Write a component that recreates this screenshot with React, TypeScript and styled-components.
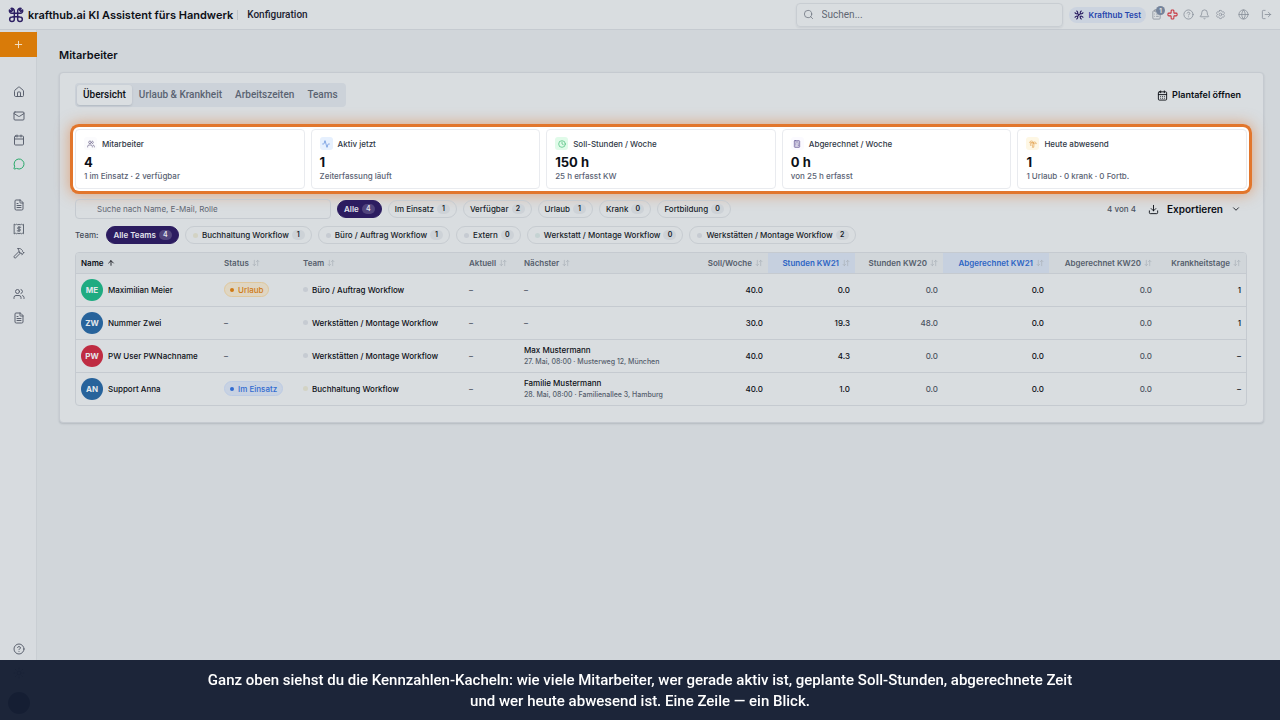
import React from "react";
import styled, { createGlobalStyle, css } from "styled-components";
import {
  Activity, ArrowDownUp, ArrowUp, Calendar, CalendarDays, ChevronDown, CircleHelp, ClipboardList, Clock,
  Cross, Download, FileText, Globe, Hammer, House, LogOut, Bell, Mail, MessageCircle, Plus, Search,
  Sun, Users, Calculator, TreePalm,
} from "lucide-react";
import { HiOutlineCog6Tooth } from "react-icons/hi2";

const GlobalStyle = createGlobalStyle`
  *, *::before, *::after { box-sizing: border-box; }
  body { margin: 0; background: #d1d6da; color: #0c0f16; font-family: Inter, "Noto Sans", sans-serif; font-size: 8px; font-weight: 500; line-height: 12px; }
  button, input { font: inherit; color: inherit; }
  button { border: 0; background: none; padding: 0; cursor: pointer; }
  a { color: inherit; text-decoration: none; }
  h1, p { margin: 0; }
  svg { flex: none; display: block; }
`;

const Page = styled.div`
  min-height: 100vh;
  display: flex;
  flex-direction: column;
`;

const TopBar = styled.header`
  height: 30px;
  display: flex;
  align-items: center;
  padding: 0 8px;
  background: #d9dde0;
  border-bottom: 1px solid #c5cad0;
`;

const Brand = styled.a`
  display: flex;
  align-items: center;
  gap: 4px;
  font-size: 11px;
  line-height: 14px;
  font-weight: 600;
  white-space: nowrap;
`;

const Crumb = styled.span`
  margin-left: 4px;
  padding-left: 9px;
  border-left: 1px solid #bfc5cb;
  font-family: Roboto, sans-serif;
  font-size: 10px;
  line-height: 10px;
  color: #1c2230;
`;

const SearchField = styled.label`
  display: flex;
  align-items: center;
  gap: 8px;
  width: 267px;
  height: 24px;
  margin-left: auto;
  padding: 0 6px;
  border: 1px solid #c8cdd2;
  border-radius: 4px;
  box-shadow: 0 1px 2px rgba(30, 41, 59, 0.08);
  color: #6d7480;
`;

const BareInput = styled.input`
  flex: 1;
  min-width: 0;
  border: 0;
  padding: 0;
  outline: 0;
  background: transparent;
  font-weight: 400;
  &::placeholder { color: #5f6672; opacity: 1; }
`;

const TopInput = styled(BareInput)`
  font-family: Roboto, sans-serif;
  font-size: 10px;
`;

const OrgChip = styled.button`
  display: flex;
  align-items: center;
  gap: 5px;
  height: 16px;
  margin: 0 5px 0 6px;
  padding: 0 5px;
  border-radius: 8px;
  background: #cbd3df;
  color: #2544ad;
  font-weight: 600;
  white-space: nowrap;
`;

const TopActions = styled.nav`
  display: flex;
  align-items: center;
  gap: 5px;
  color: #858c97;
`;

const TopAction = styled.button<{ $accent?: boolean; $apart?: boolean }>`
  position: relative;
  color: ${(p) => (p.$accent ? "#c8303a" : "inherit")};
  margin-left: ${(p) => (p.$apart ? "7px" : "0")};
`;

const Count = styled.span`
  position: absolute;
  top: -3px;
  right: -3px;
  width: 9px;
  height: 9px;
  border-radius: 50%;
  background: #75849b;
  color: #e4e8ec;
  font-size: 6px;
  line-height: 9px;
  font-weight: 700;
  text-align: center;
`;

const Body = styled.div`
  flex: 1;
  display: flex;
`;

const Sidebar = styled.nav`
  flex: none;
  width: 37px;
  padding-top: 2px;
  display: flex;
  flex-direction: column;
  background: #d7dbdf;
  box-shadow: inset -1px 0 #c9ced3;
  color: #555c69;
`;

const AddButton = styled.button`
  height: 25px;
  display: grid;
  place-items: center;
  background: #d97b09;
  color: #f3e4cf;
  margin-bottom: 6px;
`;

const SideGroup = styled.div<{ $bottom?: boolean }>`
  padding-top: 17px;
  ${(p) => p.$bottom && css`margin-top: auto;`}
`;

const SideLink = styled.a<{ $green?: boolean }>`
  height: 24px;
  display: grid;
  place-items: center;
  color: ${(p) => (p.$green ? "#22a765" : "inherit")};
`;

const Avatar = styled.span<{ $color: string }>`
  flex: none;
  display: grid;
  place-items: center;
  width: 22px;
  height: 22px;
  border-radius: 50%;
  background: ${(p) => p.$color};
  color: #e3e7ec;
  font-weight: 700;
`;

const Profile = styled.a`
  height: 35px;
  display: grid;
  place-items: center;
`;

const Main = styled.main`
  flex: 1;
  min-width: 0;
  padding: 17px 16px 0 22px;
`;

const Title = styled.h1`
  font-size: 11px;
  line-height: 16px;
  font-weight: 600;
`;

const Panel = styled.section`
  margin-top: 9px;
  padding: 10px 16px 16px 15px;
  background: #d9dde0;
  border: 1px solid #c5cad0;
  border-radius: 4px;
  box-shadow: 0 1px 2px rgba(30, 41, 59, 0.16);
`;

const Toolbar = styled.div`
  display: flex;
  align-items: center;
  justify-content: space-between;
`;

const Tabs = styled.div`
  display: flex;
  gap: 1px;
  padding: 2px;
  border-radius: 4px;
  background: #ccd2d9;
`;

const Tab = styled.button<{ $active?: boolean }>`
  height: 20px;
  padding: 0 6px;
  border-radius: 3px;
  font-family: Roboto, sans-serif;
  font-size: 10px;
  color: #5a6372;
  ${(p) => p.$active && css`
    background: #dadee1;
    color: #0c0f16;
    box-shadow: 0 1px 2px rgba(30, 41, 59, 0.15);
  `}
`;

const TextButton = styled.button<{ $wide?: boolean }>`
  display: flex;
  align-items: center;
  gap: ${(p) => (p.$wide ? "8px" : "4px")};
  padding: 0 6px;
  font-size: ${(p) => (p.$wide ? "10px" : "9px")};
  font-weight: 600;
`;

const Kpis = styled.div`
  display: grid;
  grid-template-columns: repeat(5, 1fr);
  gap: 6px;
  margin: 22px 0 10px;
  border-radius: 4px;
  background: #fff;
  box-shadow: 0 0 0 2px #fff, 0 0 0 5px #e2762c, 0 0 14px 6px rgba(226, 118, 44, 0.5);
`;

const Kpi = styled.article`
  height: 60px;
  padding: 7px 8px;
  border: 1px solid #e9ebef;
  border-radius: 4px;
  background: #fff;
`;

const KpiLabel = styled.p`
  display: flex;
  align-items: center;
  gap: 5px;
  color: #303846;
`;

const KpiIcon = styled.span<{ $bg: string; $fg: string }>`
  display: grid;
  place-items: center;
  width: 13px;
  height: 13px;
  border-radius: 3px;
  background: ${(p) => p.$bg};
  color: ${(p) => p.$fg};
`;

const KpiValue = styled.p`
  margin-top: 4px;
  font-size: 13px;
  line-height: 16px;
  font-weight: 700;
`;

const KpiNote = styled.p`
  color: #596273;
`;

const FilterRow = styled.div`
  display: flex;
  align-items: center;
  gap: 6px;
`;

const TeamRow = styled(FilterRow)`
  margin: 7px 0 8px;
`;

const TeamLabel = styled.span`
  margin-right: 2px;
  color: #434a57;
`;

const TableSearch = styled.label`
  flex: none;
  display: flex;
  width: 256px;
  height: 20px;
  padding: 0 21px;
  border: 1px solid #c5cad0;
  border-radius: 4px;
`;

const Dot = styled.i<{ $color: string; $small?: boolean }>`
  flex: none;
  width: ${(p) => (p.$small ? "4px" : "5px")};
  height: ${(p) => (p.$small ? "4px" : "5px")};
  border-radius: 50%;
  background: ${(p) => p.$color};
`;

const Chip = styled.button<{ $active?: boolean; $team?: boolean }>`
  display: flex;
  align-items: center;
  gap: 3px;
  height: 18px;
  padding: 0 6px 0 ${(p) => (p.$team ? "7px" : "6px")};
  border: 1px solid ${(p) => (p.$active ? "#2c1c60" : "#c7ccd1")};
  border-radius: 9px;
  background: ${(p) => (p.$active ? "#2c1c60" : "transparent")};
  color: ${(p) => (p.$active ? "#e3e4ee" : "#171c28")};
  font-weight: ${(p) => (p.$active ? 600 : 500)};
  white-space: nowrap;
  > ${Dot} { margin-right: 1px; }
`;

const ChipCount = styled.span<{ $active?: boolean }>`
  min-width: 13px;
  padding: 0 4px;
  border-radius: 5px;
  background: ${(p) => (p.$active ? "#51447c" : "#cdd2d7")};
  font-size: 7px;
  line-height: 10px;
  font-weight: 600;
  text-align: center;
`;

const Spacer = styled.span`
  flex: 1;
`;

const Total = styled.span`
  color: #4b5361;
`;

const TableFrame = styled.div`
  border: 1px solid #c5cad0;
  border-radius: 4px;
  overflow: hidden;
`;

const Table = styled.table`
  width: 100%;
  table-layout: fixed;
  border-collapse: collapse;
`;

const Th = styled.th<{ $right?: boolean; $hot?: boolean; $sorted?: boolean }>`
  height: 20px;
  padding: 0 5px;
  background: ${(p) => (p.$hot ? "#c6d0df" : "#d1d6da")};
  color: ${(p) => (p.$hot ? "#2d65c4" : p.$sorted ? "#0c0f16" : "#555e6c")};
  font-weight: 600;
  > button {
    display: flex;
    align-items: center;
    gap: 3px;
    width: 100%;
    justify-content: ${(p) => (p.$right ? "flex-end" : "flex-start")};
    white-space: nowrap;
  }
`;

const SortMark = styled.span<{ $on?: boolean }>`
  color: ${(p) => (p.$on ? "#0c0f16" : "#a9b0b8")};
`;

const Td = styled.td<{ $right?: boolean; $muted?: boolean }>`
  height: 33px;
  padding: 0 5px;
  border-top: 1px solid #c5cad0;
  text-align: ${(p) => (p.$right ? "right" : "left")};
  color: ${(p) => (p.$muted ? "#4b5361" : "inherit")};
  white-space: nowrap;
`;

const Inline = styled.span<{ $gap: number }>`
  display: flex;
  align-items: center;
  gap: ${(p) => p.$gap}px;
`;

const Status = styled.span<{ $tone: "amber" | "blue" }>`
  display: inline-flex;
  align-items: center;
  gap: 4px;
  height: 15px;
  padding: 0 5px;
  border-radius: 8px;
  vertical-align: middle;
  ${(p) => p.$tone === "amber"
    ? css`border: 1px solid #dfc79c; background: #dfd6c3; color: #cf7a16;`
    : css`border: 1px solid #bccbe4; background: #c8d2e2; color: #316bd0;`}
`;

const Detail = styled.small`
  display: block;
  font-size: 7px;
  line-height: 11px;
  color: #555e6c;
`;

const Caption = styled.p`
  position: fixed;
  left: 0;
  right: 0;
  bottom: 0;
  height: 60px;
  padding: 10px 24px;
  background: rgba(22, 31, 52, 0.97);
  color: #fff;
  font-family: Roboto, sans-serif;
  font-size: 15px;
  line-height: 21px;
  font-weight: 500;
  text-align: center;
`;

const BrandMark = () => (
  <svg width="16" height="16" viewBox="0 0 24 24" fill="none" stroke="#2d2063" strokeWidth="2.2" strokeLinecap="round" strokeLinejoin="round" aria-hidden>
    <path d="M9.500 9.500h5v5h-5z" />
    <path d="M9.500 9.500H6A3.800 3.800 0 0 1 2.200 4.600L5 6.600 6.800 5 4.600 2.200A3.800 3.800 0 0 1 9.500 6z" />
    <path d="M14.500 9.500V6A3.800 3.800 0 0 1 19.600 2.200L17.400 4.800l1.800 1.800L21.900 4.400A3.800 3.800 0 0 1 18 9.500z" />
    <path d="M9.500 14.500v3.900A3.500 3.500 0 1 1 6 14.900z" />
    <path d="M14.500 14.500l3.500.4A3.500 3.500 0 1 1 14.500 18.400z" />
  </svg>
);

const OrgMark = () => (
  <svg width="10" height="10" viewBox="0 0 24 24" fill="none" stroke="#2d2063" strokeWidth="2.8" strokeLinecap="round" strokeLinejoin="round" aria-hidden>
    <path d="M8 8l8 8M16 8l-8 8" />
    <path d="M2.500 6.500C4 9.500 8 9.500 8.500 8.500S9.500 4 6.500 2.500" />
    <path d="M21.500 6.500C20 9.500 16 9.500 15.500 8.500S14.500 4 17.500 2.500" />
    <path d="M2.500 17.500C4 14.500 8 14.500 8.500 15.500S9.500 20 6.500 21.500" />
    <path d="M21.500 17.500C20 14.500 16 14.500 15.500 15.500S14.500 20 17.500 21.500" />
  </svg>
);

const InvoiceIcon = () => (
  <svg width="12" height="12" viewBox="0 0 24 24" fill="none" stroke="currentColor" strokeWidth="1.8" strokeLinejoin="round" strokeLinecap="round" aria-hidden>
    <path d="M3 2.500l2 1 2-1 2.500 1 2.500-1 2.500 1 2.500-1 2 1 2-1v19l-2-1-2 1-2.500-1-2.500 1-2.500-1-2.500 1-2-1-2 1z" />
    <path d="M15.500 8.500H11a1.800 1.800 0 0 0 0 3.600h2a1.800 1.800 0 0 1 0 3.600H8.500M12 6.500v11" />
  </svg>
);

const line = { size: 12, strokeWidth: 1.9 };
const small = { size: 11, strokeWidth: 1.7 };
const tiny = { size: 8, strokeWidth: 2 };

const kpis = [
  { label: "Mitarbeiter", value: "4", note: "1 im Einsatz · 2 verfügbar", icon: <Users {...tiny} />, bg: "#fbfbfd", fg: "#665f86" },
  { label: "Aktiv jetzt", value: "1", note: "Zeiterfassung läuft", icon: <Activity {...tiny} />, bg: "#e6f0fe", fg: "#5585d8" },
  { label: "Soll-Stunden / Woche", value: "150 h", note: "25 h erfasst KW", icon: <Clock {...tiny} />, bg: "#e0fbe9", fg: "#42ba74" },
  { label: "Abgerechnet / Woche", value: "0 h", note: "von 25 h erfasst", icon: <Calculator {...tiny} />, bg: "#fbfaff", fg: "#4f3f87" },
  { label: "Heute abwesend", value: "1", note: "1 Urlaub · 0 krank · 0 Fortb.", icon: <TreePalm {...tiny} />, bg: "#fef7e4", fg: "#e3a24e" },
];

const filters: [string, number][] = [["Alle", 4], ["Im Einsatz", 1], ["Verfügbar", 2], ["Urlaub", 1], ["Krank", 0], ["Fortbildung", 0]];

const sand = "#d3d3c4";
const grey = "#c6cbd2";
const mint = "#c5d3d3";
const teams: [string, number, string][] = [
  ["Buchhaltung Workflow", 1, sand],
  ["Büro / Auftrag Workflow", 1, grey],
  ["Extern", 0, grey],
  ["Werkstatt / Montage Workflow", 0, mint],
  ["Werkstätten / Montage Workflow", 2, grey],
];

const columns: { name: string; width: number; right?: boolean; hot?: boolean; sorted?: boolean }[] = [
  { name: "Name", width: 143, sorted: true },
  { name: "Status", width: 79 },
  { name: "Team", width: 166 },
  { name: "Aktuell", width: 55 },
  { name: "Nächster", width: 161 },
  { name: "Soll/Woche", width: 88, right: true },
  { name: "Stunden KW21", width: 87, right: true, hot: true },
  { name: "Stunden KW20", width: 88, right: true },
  { name: "Abgerechnet KW21", width: 106, right: true, hot: true },
  { name: "Abgerechnet KW20", width: 108, right: true },
  { name: "Krankheitstage", width: 89, right: true },
];

interface Employee {
  initials: string;
  color: string;
  name: string;
  status?: ["amber" | "blue", string];
  team: string;
  dot: string;
  next?: [string, string];
  hours: string[];
}

const employees: Employee[] = [
  { initials: "ME", color: "#1fab81", name: "Maximilian Meier", status: ["amber", "Urlaub"], team: "Büro / Auftrag Workflow", dot: grey, hours: ["40.0", "0.0", "0.0", "0.0", "0.0", "1"] },
  { initials: "ZW", color: "#27639b", name: "Nummer Zwei", team: "Werkstätten / Montage Workflow", dot: grey, hours: ["30.0", "19.3", "48.0", "0.0", "0.0", "1"] },
  { initials: "PW", color: "#bf2c42", name: "PW User PWNachname", team: "Werkstätten / Montage Workflow", dot: grey, next: ["Max Mustermann", "27. Mai, 08:00 · Musterweg 12, München"], hours: ["40.0", "4.3", "0.0", "0.0", "0.0", "–"] },
  { initials: "AN", color: "#27639b", name: "Support Anna", status: ["blue", "Im Einsatz"], team: "Buchhaltung Workflow", dot: sand, next: ["Familie Mustermann", "28. Mai, 08:00 · Familienallee 3, Hamburg"], hours: ["40.0", "1.0", "0.0", "0.0", "0.0", "–"] },
];

export default function App() {
  return (
    <Page>
      <GlobalStyle />
      <TopBar>
        <Brand href="#"><BrandMark />krafthub.ai KI Assistent fürs Handwerk</Brand>
        <Crumb>Konfiguration</Crumb>
        <SearchField>
          <Search {...small} />
          <TopInput type="search" placeholder="Suchen..." aria-label="Suchen" />
        </SearchField>
        <OrgChip><OrgMark />Krafthub Test</OrgChip>
        <TopActions aria-label="Konto">
          <TopAction aria-label="Aufgaben"><ClipboardList {...small} /><Count>1</Count></TopAction>
          <TopAction aria-label="Notfall" $accent><Cross {...small} strokeWidth={2.2} /></TopAction>
          <TopAction aria-label="Hilfe"><CircleHelp {...small} /></TopAction>
          <TopAction aria-label="Benachrichtigungen"><Bell {...small} /></TopAction>
          <TopAction aria-label="Einstellungen"><HiOutlineCog6Tooth size={11} /></TopAction>
          <TopAction aria-label="Sprache" $apart><Globe {...small} /></TopAction>
          <TopAction aria-label="Abmelden" $apart><LogOut {...small} /></TopAction>
        </TopActions>
      </TopBar>
      <Body>
        <Sidebar aria-label="Hauptmenü">
          <AddButton aria-label="Neu"><Plus size={11} strokeWidth={2} /></AddButton>
          <SideGroup>
            <SideLink href="#" aria-label="Start"><House {...line} /></SideLink>
            <SideLink href="#" aria-label="E-Mail"><Mail {...line} /></SideLink>
            <SideLink href="#" aria-label="Kalender"><Calendar {...line} /></SideLink>
            <SideLink href="#" aria-label="Nachrichten" $green><MessageCircle {...line} /></SideLink>
          </SideGroup>
          <SideGroup>
            <SideLink href="#" aria-label="Dokumente"><FileText {...line} /></SideLink>
            <SideLink href="#" aria-label="Rechnungen"><InvoiceIcon /></SideLink>
            <SideLink href="#" aria-label="Aufträge"><Hammer {...line} /></SideLink>
          </SideGroup>
          <SideGroup>
            <SideLink href="#" aria-label="Mitarbeiter"><Users {...line} /></SideLink>
            <SideLink href="#" aria-label="Berichte"><FileText {...line} /></SideLink>
          </SideGroup>
          <SideGroup $bottom>
            <SideLink href="#" aria-label="Hilfe"><CircleHelp {...line} /></SideLink>
            <SideLink href="#" aria-label="Darstellung"><Sun {...line} /></SideLink>
            <Profile href="#" aria-label="Profil"><Avatar $color="#101625" /></Profile>
          </SideGroup>
        </Sidebar>
        <Main>
          <Title>Mitarbeiter</Title>
          <Panel>
            <Toolbar>
              <Tabs role="tablist">
                <Tab role="tab" aria-selected $active>Übersicht</Tab>
                <Tab role="tab">Urlaub &amp; Krankheit</Tab>
                <Tab role="tab">Arbeitszeiten</Tab>
                <Tab role="tab">Teams</Tab>
              </Tabs>
              <TextButton><CalendarDays size={11} />Plantafel öffnen</TextButton>
            </Toolbar>
            <Kpis>
              {kpis.map((k) => (
                <Kpi key={k.label}>
                  <KpiLabel><KpiIcon $bg={k.bg} $fg={k.fg}>{k.icon}</KpiIcon>{k.label}</KpiLabel>
                  <KpiValue>{k.value}</KpiValue>
                  <KpiNote>{k.note}</KpiNote>
                </Kpi>
              ))}
            </Kpis>
            <FilterRow>
              <TableSearch>
                <BareInput type="search" placeholder="Suche nach Name, E-Mail, Rolle" aria-label="Mitarbeiter suchen" />
              </TableSearch>
              {filters.map(([name, n], i) => (
                <Chip key={name} $active={i === 0}>{name}<ChipCount $active={i === 0}>{n}</ChipCount></Chip>
              ))}
              <Spacer />
              <Total>4 von 4</Total>
              <TextButton $wide><Download size={11} />Exportieren<ChevronDown size={10} /></TextButton>
            </FilterRow>
            <TeamRow>
              <TeamLabel>Team:</TeamLabel>
              <Chip $active>Alle Teams<ChipCount $active>4</ChipCount></Chip>
              {teams.map(([name, n, dot]) => (
                <Chip key={name} $team><Dot $color={dot} />{name}<ChipCount>{n}</ChipCount></Chip>
              ))}
            </TeamRow>
            <TableFrame>
              <Table>
                <colgroup>{columns.map((c) => <col key={c.name} width={c.width} />)}</colgroup>
                <thead>
                  <tr>
                    {columns.map((c) => (
                      <Th key={c.name} $right={c.right} $hot={c.hot} $sorted={c.sorted}>
                        <button>
                          {c.name}
                          <SortMark $on={c.sorted}>{c.sorted ? <ArrowUp size={8} strokeWidth={2.5} /> : <ArrowDownUp size={8} strokeWidth={2} />}</SortMark>
                        </button>
                      </Th>
                    ))}
                  </tr>
                </thead>
                <tbody>
                  {employees.map((e) => (
                    <tr key={e.name}>
                      <Td><Inline $gap={5}><Avatar $color={e.color}>{e.initials}</Avatar>{e.name}</Inline></Td>
                      <Td $muted>{e.status ? <Status $tone={e.status[0]}><Dot $small $color="currentColor" />{e.status[1]}</Status> : "–"}</Td>
                      <Td><Inline $gap={4}><Dot $color={e.dot} />{e.team}</Inline></Td>
                      <Td $muted>–</Td>
                      <Td $muted={!e.next}>{e.next ? <>{e.next[0]}<Detail>{e.next[1]}</Detail></> : "–"}</Td>
                      {e.hours.map((h, i) => <Td key={i} $right $muted={i === 2 || i === 4}>{h}</Td>)}
                    </tr>
                  ))}
                </tbody>
              </Table>
            </TableFrame>
          </Panel>
        </Main>
      </Body>
      <Caption>
        Ganz oben siehst du die Kennzahlen-Kacheln: wie viele Mitarbeiter, wer gerade aktiv ist, geplante Soll-Stunden, abgerechnete Zeit
        <br />
        und wer heute abwesend ist. Eine Zeile — ein Blick.
      </Caption>
    </Page>
  );
}
